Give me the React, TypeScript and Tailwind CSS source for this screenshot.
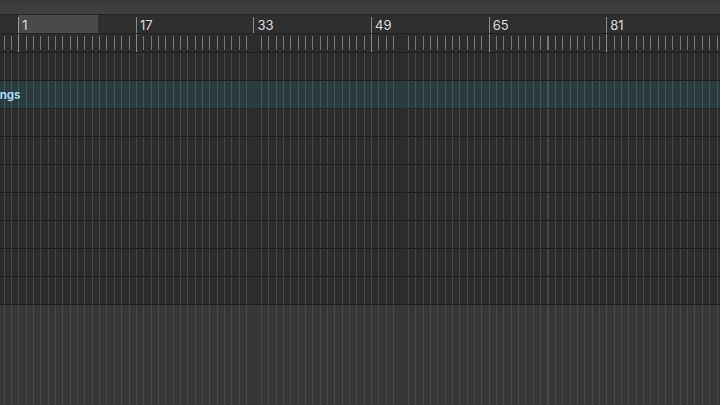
import React from "react";

const labels = [1, 17, 33, 49, 65, 81];

export default function App() {
  const rows = Array.from({ length: 9 }, (_, i) => i);
  return (
    <div className="w-[720px] h-[405px] overflow-hidden flex flex-col bg-[#353535] font-['Inter','Liberation_Sans',sans-serif]">
      {/* top bar */}
      <div className="h-[15px] shrink-0 bg-[linear-gradient(#383838,#3f3f3f)] border-b border-[#262626]" />
      {/* ruler */}
      <div className="h-[19px] shrink-0 flex bg-[#2f2f2f] border-b border-[#222222]">
        <div className="w-[18.3px] shrink-0" />
        {labels.map((n, i) => (
          <div
            key={n}
            className={
              i === 0
                ? "w-[117.6px] shrink-0 flex bg-[linear-gradient(90deg,#4a4a4a_80px,transparent_80px)]"
                : "w-[117.6px] shrink-0 flex"
            }
          >
            <div className={i === 0 ? "w-px h-[16px] mt-[2px] bg-[#9a9a9a]" : "w-px h-[16px] mt-[2px] bg-[#8a8a8a]"} />
            <span className="ml-[3px] text-[13px] leading-[20px] text-[#dadada]">{n}</span>
          </div>
        ))}
      </div>
      {/* tick row */}
      <div className="h-[19px] shrink-0 border-b border-[#1e1e1e] bg-[#2c2c2c] bg-[repeating-linear-gradient(90deg,transparent_0_18.3px,#8a8a8a_18.3px_19.3px,transparent_19.3px_117.6px),repeating-linear-gradient(90deg,transparent_0_3.6px,#767676_3.6px_4.6px,transparent_4.6px_7.35px)] bg-[length:100%_100%,100%_14px] bg-[position:0_0,0_2px] bg-no-repeat" />
      {/* tracks */}
      {rows.map((i) => (
        <div
          key={i}
          className={
            i === 1
              ? "h-[28px] shrink-0 flex items-center border-b border-[#232a2b] bg-[#2a3b3d] bg-[repeating-linear-gradient(90deg,transparent_0_3.6px,rgba(255,255,255,0.12)_3.6px_4.6px,transparent_4.6px_7.35px)]"
              : "h-[28px] shrink-0 flex items-center border-b border-[#1e1e1e] bg-[#2c2c2c] bg-[repeating-linear-gradient(90deg,transparent_0_3.6px,rgba(255,255,255,0.12)_3.6px_4.6px,transparent_4.6px_7.35px)]"
          }
        >
          {i === 1 && (
            <span className="ml-[-20px] pt-[2px] text-[11.5px] font-bold text-[#a3d9f3] whitespace-nowrap">Strings</span>
          )}
        </div>
      ))}
      {/* empty area */}
      <div className="flex-1 bg-[#363636] bg-[repeating-linear-gradient(90deg,transparent_0_3.6px,rgba(255,255,255,0.09)_3.6px_4.6px,transparent_4.6px_7.35px)]" />
    </div>
  );
}
